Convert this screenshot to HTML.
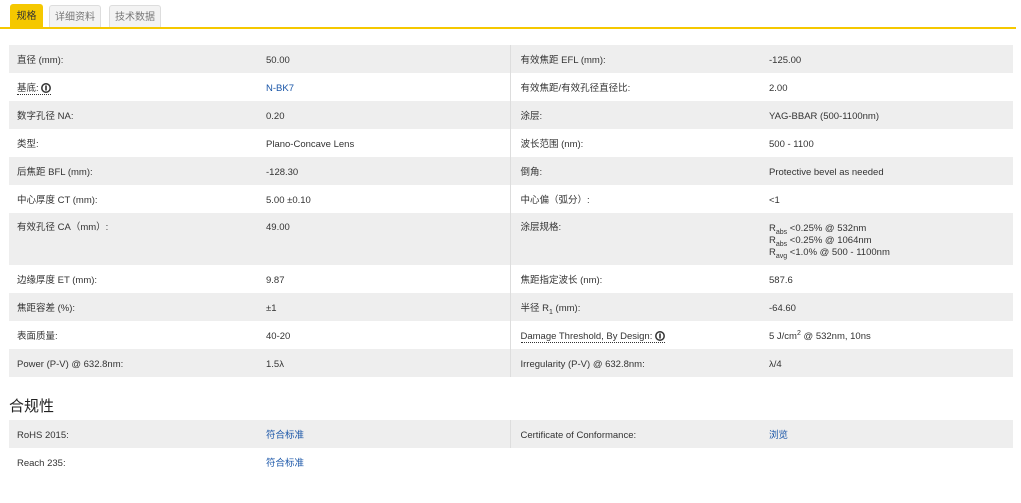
<!DOCTYPE html>
<html><head><meta charset="utf-8"><style>
body{margin:0;background:#fff;font-family:"Liberation Sans","Noto Sans CJK SC",sans-serif;color:#333;width:1021px;height:503px;overflow:hidden;position:relative}
.tab{position:absolute;top:5px;height:23px;font-size:10px;line-height:24px;text-align:center;border:1px solid #ddd;border-bottom:none;border-radius:3px 3px 0 0;background:#f3f3f3;color:#777;box-sizing:border-box}
.t1{left:10px;width:33px;top:4px;height:24px;background:#f5c800;border-color:#f5c800;color:#333}
.line{position:absolute;left:0;top:27px;width:1016px;height:2px;background:#f5c800}
table{position:absolute;left:9px;width:1004px;border-collapse:collapse;font-size:9.5px;line-height:12px;table-layout:fixed}
td{padding:3px 0 0 8px;height:28px;vertical-align:middle;box-sizing:border-box}
tr:nth-child(odd) td{background:#eee}
td.c2{border-right:1px solid #ddd}td.c3{padding-left:10px}
a{color:#1a56a8;text-decoration:none}
.u{border-bottom:1px dotted #333}
svg{vertical-align:-2px}
h3{position:absolute;left:9px;top:397px;margin:0;font-size:15px;font-weight:normal;color:#222;line-height:20px}
sub,sup{font-size:7px;line-height:0}
.tl{vertical-align:top!important;padding-top:9px}
</style></head><body>
<div class="tab t1">规格</div><div class="tab" style="left:49px;width:52px">详细资料</div><div class="tab" style="left:109px;width:52px">技术数据</div>
<div class="line"></div>
<table style="top:45px">
<colgroup><col style="width:249px"><col style="width:252px"><col style="width:251px"><col></colgroup>
<tr><td class="c1">直径 (mm):</td><td class="c2">50.00</td><td class="c3">有效焦距 EFL (mm):</td><td>-125.00</td></tr>
<tr><td class="c1"><span class="u">基底: <svg width="10" height="10" viewBox="0 0 10 10"><circle cx="5" cy="5" r="4.2" fill="none" stroke="#333" stroke-width="1.5"/><rect x="4.2" y="2.5" width="1.6" height="5" fill="#333"/></svg></span></td><td class="c2"><a>N-BK7</a></td><td class="c3">有效焦距/有效孔径直径比:</td><td>2.00</td></tr>
<tr><td class="c1">数字孔径 NA:</td><td class="c2">0.20</td><td class="c3">涂层:</td><td>YAG-BBAR (500-1100nm)</td></tr>
<tr><td class="c1">类型:</td><td class="c2">Plano-Concave Lens</td><td class="c3">波长范围 (nm):</td><td>500 - 1100</td></tr>
<tr><td class="c1">后焦距 BFL (mm):</td><td class="c2">-128.30</td><td class="c3">倒角:</td><td>Protective bevel as needed</td></tr>
<tr><td class="c1" style="height:27px">中心厚度 CT (mm):</td><td class="c2">5.00 ±0.10</td><td class="c3">中心偏（弧分）:</td><td>&lt;1</td></tr>
<tr><td class="c1 tl" style="height:52px">有效孔径 CA（mm）:</td><td class="c2 tl">49.00</td><td class="c3 tl">涂层规格:</td><td class="tl" style="padding-top:10px">R<sub>abs</sub> &lt;0.25% @ 532nm<br>R<sub>abs</sub> &lt;0.25% @ 1064nm<br>R<sub>avg</sub> &lt;1.0% @ 500 - 1100nm</td></tr>
<tr><td class="c1" style="height:27px">边缘厚度 ET (mm):</td><td class="c2">9.87</td><td class="c3">焦距指定波长 (nm):</td><td>587.6</td></tr>
<tr><td class="c1">焦距容差 (%):</td><td class="c2">±1</td><td class="c3">半径 R<sub>1</sub> (mm):</td><td>-64.60</td></tr>
<tr><td class="c1" style="height:28px">表面质量:</td><td class="c2">40-20</td><td class="c3"><span class="u">Damage Threshold, By Design: <svg width="10" height="10" viewBox="0 0 10 10"><circle cx="5" cy="5" r="4.2" fill="none" stroke="#333" stroke-width="1.5"/><rect x="4.2" y="2.5" width="1.6" height="5" fill="#333"/></svg></span></td><td>5 J/cm<sup>2</sup> @ 532nm, 10ns</td></tr>
<tr><td class="c1">Power (P-V) @ 632.8nm:</td><td class="c2">1.5λ</td><td class="c3">Irregularity (P-V) @ 632.8nm:</td><td>λ/4</td></tr>
</table>
<h3>合规性</h3>
<table style="top:420px">
<colgroup><col style="width:249px"><col style="width:252px"><col style="width:251px"><col></colgroup>
<tr><td class="c1">RoHS 2015:</td><td class="c2"><a>符合标准</a></td><td class="c3">Certificate of Conformance:</td><td><a>浏览</a></td></tr>
<tr><td class="c1">Reach 235:</td><td class="c2" style="border-right:none"><a>符合标准</a></td><td class="c3"></td><td></td></tr>
</table>
</body></html>
